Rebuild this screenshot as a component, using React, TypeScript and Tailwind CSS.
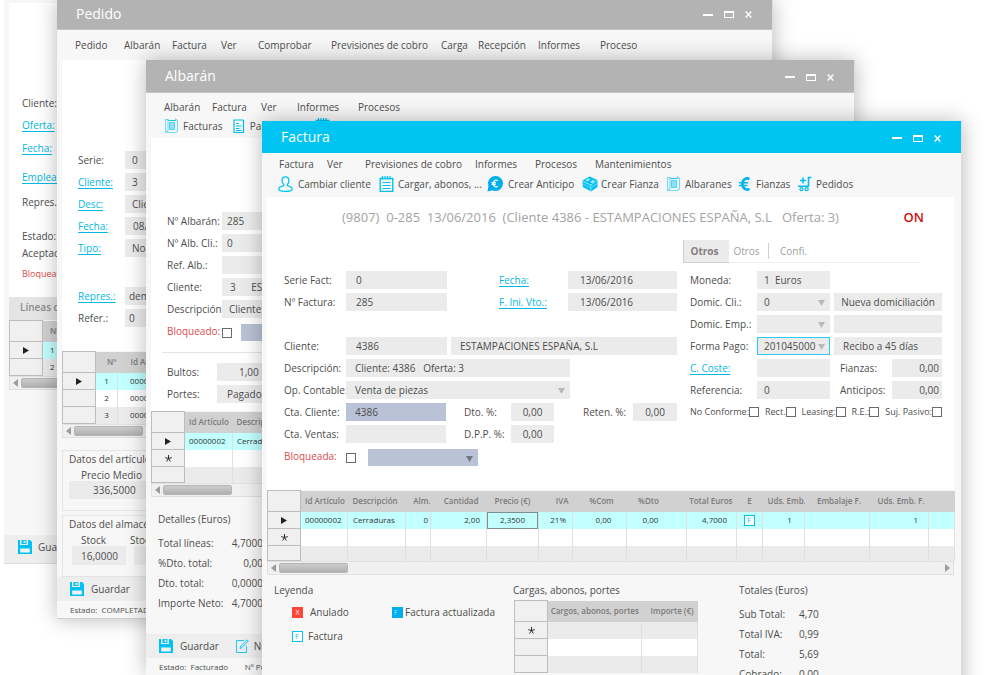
import { useId, type ReactNode } from 'react'
import { clsx } from 'clsx'

/* ---------- icons ---------- */

type IconProps = { className?: string }

function UserIcon({ className }: IconProps) {
  return (
    <svg className={className} viewBox="0 0 16 16" fill="none" stroke="#00c3f3" strokeWidth="1.3">
      <path d="M7.500 .8C5.200 .8 4 2.400 4 4.600c0 1.600.8 3.200 1.700 4v1C3 10.200 .8 11.200 .8 13.200c0 1.500 2.700 2.100 6.700 2.100s6.700-.6 6.700-2.100c0-2-2.200-3-4.900-3.600v-1c.9-.8 1.700-2.400 1.700-4C11 2.400 9.800 .8 7.500 .8z" />
    </svg>
  )
}

function NotepadIcon({ className }: IconProps) {
  return (
    <svg className={className} viewBox="0 0 16 16" fill="none" stroke="#00c3f3">
      <path d="M1.200 2.500h12.600v13H1.200z" strokeWidth="1.400" />
      <path d="M3.500 0v3.500M6 0v3.500M8.500 0v3.500M11 0v3.500" strokeWidth="1.200" />
      <path d="M3.500 6.500h8M3.500 9.500h8M3.500 12.500h8" strokeWidth="1.100" />
    </svg>
  )
}

function EuroBubbleIcon({ className }: IconProps) {
  return (
    <svg className={className} viewBox="0 0 16 16">
      <circle cx="8.500" cy="7.500" r="7.500" fill="#00aef0" />
      <path d="M1.500 9.500L.5 15.500l6-1.500z" fill="#00aef0" />
      <path d="M10.800 4.800C8.800 3.300 6.300 4.500 6.300 7.500s2.500 4.200 4.500 2.700M4.600 6.700h4.500M4.600 8.400h4.200" fill="none" stroke="#fff" strokeWidth="1.300" />
    </svg>
  )
}

function CrateIcon({ className }: IconProps) {
  return (
    <svg className={className} viewBox="0 0 16 16">
      <path d="M.5 4.500L7.500 .5 15.500 4v7L9 15.500.8 11z" fill="#00c0f2" />
      <path d="M.8 5.200l7.900 3.800L15.300 4.500M8.800 9v6.300" fill="none" stroke="#c9f3fd" strokeWidth=".7" />
      <path d="M3.500 4.300l3-1.800 1.800.9-3 1.900zM8.200 6l2.800-1.900 1.800.8-2.800 2z" fill="#bdf0fd" />
      <path d="M1.500 8.200l6.500 3.400M9.500 11.400L15 7.700" stroke="#7fe0f8" strokeWidth=".8" />
    </svg>
  )
}

function PapersIcon({ className }: IconProps) {
  return (
    <svg className={className} viewBox="0 0 16 16" fill="none" stroke="#6edbf7">
      <path d="M1.500 4V1.500h2.500v11L2 14.500h9.500l2-1.500V2.500L11.500 1v1.500H4" strokeWidth="1.100" />
      <path d="M1.500 4.500v10h9.500" strokeWidth="1" />
      <path d="M5.500 4.500h5v7h-5z" fill="#8be3f9" stroke="#4fd3f5" />
      <path d="M4 1.500l.8 1h6.700" stroke="#12c4f2" />
    </svg>
  )
}

function EuroIcon({ className }: IconProps) {
  return (
    <svg className={className} viewBox="0 0 16 16" fill="none" stroke="#00b4f0">
      <path d="M12.500 3.200C9.500 1.300 5.500 3 5.500 8s4 6.700 7 4.800" strokeWidth="2.600" />
      <path d="M2 6.700h9M2 9.500h8.300" strokeWidth="1.500" />
    </svg>
  )
}

function CartIcon({ className }: IconProps) {
  return (
    <svg className={className} viewBox="0 0 16 16" fill="none" stroke="#00bdf2">
      <path d="M14.500 1.500h-3V10.200M1 10.200h11M6 1.500v6M3 4.500h6" strokeWidth="1.600" />
      <circle cx="4.500" cy="13.200" r="1.500" strokeWidth="1.300" />
      <circle cx="9.700" cy="13.200" r="1.500" strokeWidth="1.300" />
    </svg>
  )
}

function DocIcon({ className }: IconProps) {
  return (
    <svg className={className} viewBox="0 0 16 16" fill="none" stroke="#00bdf2">
      <path d="M3 2h9l.5.500v12H3z" strokeWidth="1.200" />
      <path d="M5 5.500h3M5 8h5.500M5 10.500h3.500M5 12.500h5.500" />
    </svg>
  )
}

function SaveIcon({ className }: IconProps) {
  return (
    <svg className={className} viewBox="0 0 14 14">
      <path d="M0 0h2v5h8V0h2l2 2v12H0z" fill="#00c3f3" />
      <path d="M3.500 0h5v4h-5z" fill="#00c3f3" />
      <path d="M5.600 .8h1.800V3H5.600zM2.200 8.500h9.600v4H2.200z" fill="#f2f2f2" />
    </svg>
  )
}

function EditIcon({ className }: IconProps) {
  return (
    <svg className={className} viewBox="0 0 14 14" fill="none" stroke="#1fc8f3">
      <path d="M9 1.500H1.500v12h10V7" />
      <path d="M5 9.500l.6-2.300L12 .8l1.300 1.300-6.200 6.500z" fill="#c9f3fd" />
    </svg>
  )
}

/* ---------- window chrome ---------- */

function TitleBar({ title, active, className }: { title: string; active?: boolean; className: string }) {
  return (
    <header
      className={clsx(
        'flex items-center justify-between pr-4 pl-[19px] text-white',
        active ? 'bg-[#00c5f2]' : 'border-b border-[#c4c4c4] bg-[#b3b3b3]',
        className,
      )}
    >
      <h2 className="text-sm font-normal">{title}</h2>
      <div className="flex items-center gap-[10px] pt-[2px]">
        <button aria-label="Minimizar" className="flex size-[11px] items-center">
          <span className="h-[2px] w-[10px] bg-white" />
        </button>
        <button aria-label="Maximizar" className="flex size-[11px] items-center">
          <span className="h-[7px] w-[10px] border border-t-2 border-white" />
        </button>
        <button aria-label="Cerrar" className="flex size-[11px] items-center">
          <svg className="size-[7px]" viewBox="0 0 7 7" stroke="#fff" strokeWidth="1.400">
            <path d="M.7.500l5.600 6M6.300.500l-5.600 6" />
          </svg>
        </button>
      </div>
    </header>
  )
}

function Menu({ items, className }: { items: string[]; className: string }) {
  return (
    <nav className={clsx('grid', className)}>
      {items.map((item) => (
        <button key={item} className="text-left whitespace-nowrap">
          {item}
        </button>
      ))}
    </nav>
  )
}

function Tool({ icon, children }: { icon: ReactNode; children: ReactNode }) {
  return (
    <button className="flex items-center gap-[3px] whitespace-nowrap">
      {icon}
      {children}
    </button>
  )
}

function Footer({ status, children }: { status: string; children: ReactNode }) {
  return (
    <footer>
      <div className="flex h-6 items-center gap-4 border-t border-[#ececec] bg-[#eeeeee] pb-[2px] pl-[13px]">{children}</div>
      <p className="h-[17px] pl-[13px] text-[8px] leading-[17px] whitespace-pre">{status}</p>
    </footer>
  )
}

/* ---------- form pieces ---------- */

type FieldProps = {
  label: string
  value?: string
  link?: boolean
  select?: boolean
  tone?: 'grey' | 'blue' | 'focus'
  labelClass: string
  fieldClass: string
  align?: string
}

const tones = {
  grey: 'bg-[#ebebeb]',
  blue: 'bg-[#b9c2d6]',
  focus: 'bg-[#ebebeb] border border-[#2ccbf2]',
}

const linkClass = 'text-[#00b9e4] underline underline-offset-2'

function Field({ label, value = '', link, select, tone = 'grey', labelClass, fieldClass, align }: FieldProps) {
  const id = useId()
  const box = clsx('h-[18px] w-full min-w-0 rounded-none', tones[tone], align ?? 'pl-[10px]')

  return (
    <div className="flex h-[18px] items-center">
      {link ? (
        <a href="#" id={`${id}-l`} className={clsx('shrink-0 whitespace-nowrap', linkClass, labelClass)}>
          {label}
        </a>
      ) : (
        <label id={`${id}-l`} htmlFor={id} className={clsx('shrink-0 whitespace-nowrap', labelClass)}>
          {label}
        </label>
      )}
      {select ? (
        <div className={clsx('relative shrink-0', fieldClass)}>
          <select id={id} aria-labelledby={`${id}-l`} className={clsx('block appearance-none', box)}>
            <option>{value}</option>
          </select>
          <Caret dark={tone === 'blue'} />
        </div>
      ) : (
        <div className={clsx('shrink-0', fieldClass)}>
          <input id={id} aria-labelledby={`${id}-l`} defaultValue={value} className={clsx('block', box)} />
        </div>
      )}
    </div>
  )
}

function Caret({ dark }: { dark?: boolean }) {
  return (
    <svg className="pointer-events-none absolute top-[7px] right-[5px] h-[6px] w-[7px]" viewBox="0 0 7 6">
      <path d="M0 0h7L3.500 6z" fill={dark ? '#75757d' : '#b9b9b9'} />
    </svg>
  )
}

function Box({ label, value = '', className }: { label: string; value?: string; className: string }) {
  return (
    <input aria-label={label} defaultValue={value} className={clsx('h-[18px] shrink-0 bg-[#ebebeb] pl-[9px]', className)} />
  )
}

function Check({ label }: { label: string }) {
  return (
    <label className="flex items-center whitespace-nowrap">
      {label}
      <input type="checkbox" className="size-[10px] appearance-none border border-[#6b6b6b] bg-white checked:bg-[#6b6b6b]" />
    </label>
  )
}

function BlockedRow({ label, id, className, selectClass }: { label: string; id: string; className: string; selectClass: string }) {
  return (
    <div className="flex h-[18px] items-center">
      <label htmlFor={id} className={clsx('text-[#dd4b4b]', className)}>
        {label}
      </label>
      <input
        id={id}
        type="checkbox"
        className="mt-[3px] mr-3 size-[10px] shrink-0 appearance-none border border-[#6b6b6b] bg-white checked:bg-[#6b6b6b]"
      />
      <div className={clsx('relative mt-[3px] shrink-0', selectClass)}>
        <select aria-label={`Motivo ${id}`} className="block h-[17px] w-full appearance-none bg-[#b9c2d6]">
          <option></option>
        </select>
        <Caret dark />
      </div>
    </div>
  )
}

/* ---------- grids ---------- */

function RowHead({ mark }: { mark?: 'arrow' | 'new' }) {
  return (
    <th className="border border-[#bdbdbd] bg-[#f0f0f0] p-0 text-center font-normal">
      {mark === 'arrow' && (
        <svg className="mx-auto h-[7px] w-[6px]" viewBox="0 0 6 7">
          <path d="M0 0l6 3.500L0 7z" fill="#222" />
        </svg>
      )}
      {mark === 'new' && (
        <svg className="mx-auto size-[7px]" viewBox="0 0 8 8" stroke="#222" strokeWidth="1.100">
          <path d="M4 0v4M4 4L.300 3M4 4l3.700-1M4 4L1.800 7.500M4 4l2.200 3.500" />
        </svg>
      )}
    </th>
  )
}

type Col = { title: string; width: string; head?: string; cell?: string }
type Row = { mark?: 'arrow' | 'new'; tone: string; height?: string; cells?: ReactNode[] }

function DataGrid({ cols, rows, className }: { cols: Col[]; rows: Row[]; className?: string }) {
  return (
    <table className={clsx('table-fixed border-collapse text-[8px] leading-[10px]', className)}>
      <colgroup>
        <col className="w-[33px]" />
        {cols.map((c, i) => (
          <col key={i} className={c.width} />
        ))}
      </colgroup>
      <thead>
        <tr className="h-[21px] bg-[#d1d1d1] text-[#7a7a7a]">
          <RowHead />
          {cols.map((c, i) => (
            <th key={i} className={clsx('overflow-hidden p-0 font-semibold whitespace-nowrap', c.head ?? 'text-center')}>
              {c.title}
            </th>
          ))}
        </tr>
      </thead>
      <tbody className="text-[#333333]">
        {rows.map((r, i) => (
          <tr key={i} className={clsx(r.height ?? 'h-[17px]', r.tone)}>
            <RowHead mark={r.mark} />
            {cols.map((c, j) => (
              <td key={j} className={clsx('overflow-hidden border-r border-[#e0e0e0] p-0 whitespace-nowrap', c.cell ?? 'text-center')}>
                {r.cells?.[j]}
              </td>
            ))}
          </tr>
        ))}
      </tbody>
    </table>
  )
}

function Scrollbar({ end }: { end?: boolean }) {
  return (
    <div className="flex h-[14px] items-center border border-[#e0e0e0] bg-[#f0f0f0] px-[3px]">
      <svg className="mr-[3px] h-2 w-[5px]" viewBox="0 0 5 8">
        <path d="M5 0v8L0 4z" fill="#9b9b9b" />
      </svg>
      <div className="h-[10px] w-[69px] rounded-[2px] border border-[#b5b5b5] bg-gradient-to-b from-[#cccccc] to-[#b0b0b0]" />
      {end && (
        <svg className="ml-auto h-2 w-[5px]" viewBox="0 0 5 8">
          <path d="M0 0v8l5-4z" fill="#9b9b9b" />
        </svg>
      )}
    </div>
  )
}

const WHITE = 'bg-white'
const CYAN = 'bg-[#c2ffff]'
const GREY = 'bg-[#ebebeb]'

const windowClass = 'absolute border-r border-[#dcdcdc] bg-[#f7f7f7] shadow-[0_0_20px_rgba(0,0,0,0.28)]'

/* ---------- windows ---------- */

function OfertaWindow() {
  return (
    <section className="absolute top-0 left-1 w-[600px] border-b border-[#dcdcdc] bg-[#f7f7f7] pt-[3px]">
      <div className="mx-[5px]">
        <div className="flex h-[294px] flex-col bg-white pt-[92px] pl-[13px] leading-4">
          <span className="h-[22px]">Cliente:</span>
          <a href="#" className={clsx('h-[23px]', linkClass)}>Oferta:</a>
          <a href="#" className={clsx('h-[29px]', linkClass)}>Fecha:</a>
          <a href="#" className={clsx('h-[25px]', linkClass)}>Empleado:</a>
          <span className="h-[34px]">Repres.:</span>
          <span className="h-[17px]">Estado:</span>
          <span className="h-[21px]">Aceptación:</span>
          <span className="text-[9px] text-[#dd4b4b]">Bloqueado:</span>
        </div>
        <h3 className="h-[23px] bg-[#e4e4e4] pl-[11px] text-[10px] leading-[21px] font-semibold text-[#8a8a8a]">Líneas de</h3>
        <DataGrid
          cols={[
            { title: 'Nº', width: 'w-[22px]', head: 'pl-[7px] text-left', cell: 'pl-[7px] text-left' },
            { title: 'Id Artículo', width: 'w-[60px]' },
          ]}
          rows={[
            { mark: 'arrow', tone: CYAN, cells: ['1', '00000001'] },
            { tone: GREY, cells: ['2', '00000002'] },
          ]}
        />
        <Scrollbar />
      </div>
      <div className="mt-[145px] flex h-[28px] items-center bg-[#eeeeee] pb-[4px] pl-[14px]">
        <button className="flex items-center gap-[6px]">
          <SaveIcon className="size-[14px]" />
          Guardar
        </button>
      </div>
    </section>
  )
}

function PedidoWindow() {
  const col = { labelClass: 'w-[47px]', fieldClass: 'w-[120px]' }
  return (
    <section className={clsx(windowClass, 'top-0 left-[57px] w-[716px] border-b border-b-[#cfcfcf]')}>
      <TitleBar title="Pedido" className="h-[30px] pb-[2px]" />
      <Menu
        className="h-[30px] grid-cols-[49px_48px_49px_37px_73px_110px_37px_60px_62px_auto] pl-[18px]"
        items={['Pedido', 'Albarán', 'Factura', 'Ver', 'Comprobar', 'Previsiones de cobro', 'Carga', 'Recepción', 'Informes', 'Proceso']}
      />
      <div className="mx-[5px]">
        <div className="flex h-[291px] flex-col gap-1 bg-white pt-[91px] pl-4">
          <Field {...col} label="Serie:" value="0" align="pl-[7px]" />
          <Field {...col} label="Cliente:" value="3" align="pl-[7px]" link />
          <Field {...col} label="Desc:" value="Cliente: 3" align="pl-[7px]" link />
          <Field {...col} label="Fecha:" value="08/06/2016" align="pl-2" link />
          <Field {...col} label="Tipo:" value="Normal" align="pl-[7px]" link />
          <div className="mt-[26px] flex flex-col gap-1">
            <Field {...col} label="Repres.:" value="demo" align="pl-1" link />
            <Field {...col} label="Refer.:" value="0" align="pl-1" />
          </div>
        </div>
        <DataGrid
          cols={[
            { title: 'Nº', width: 'w-[22px]', head: 'pl-[11px] text-left', cell: 'text-center' },
            { title: 'Id Artículo', width: 'w-[80px]', head: 'pl-[13px] text-left', cell: 'pl-[12px] text-left' },
          ]}
          rows={[
            { mark: 'arrow', tone: CYAN, cells: ['1', '00000001'] },
            { tone: WHITE, cells: ['2', '00000002'] },
            { tone: GREY, cells: ['3', '00000003'] },
          ]}
        />
        <Scrollbar />
        <fieldset className="mt-3 h-[61px] border border-[#e4e4e4] pl-[6px] leading-4">
          <p>Datos del artículo</p>
          <label htmlFor="precio-medio" className="block h-[14px] pl-3">Precio Medio</label>
          <input id="precio-medio" defaultValue="336,5000" className="h-[18px] w-[140px] bg-[#ebebeb] pl-6" />
        </fieldset>
        <fieldset className="mt-1 h-[62px] border border-[#e4e4e4] pl-[6px] leading-4">
          <p>Datos del almacén</p>
          <div className="flex gap-2 pl-[3px]">
            <label className="flex w-[54px] flex-col">
              <span className="h-[14px] pl-[9px]">Stock</span>
              <input defaultValue="16,0000" className="h-[19px] w-full bg-[#ebebeb] pl-[9px]" />
            </label>
            <label className="flex w-[54px] flex-col">
              <span className="-ml-1 h-[14px]">Stock real</span>
              <input defaultValue="" className="h-[19px] w-full bg-[#ebebeb]" />
            </label>
          </div>
        </fieldset>
      </div>
      <Footer status="Estado:  COMPLETADO">
        <button className="flex items-center gap-[7px]">
          <SaveIcon className="size-[14px]" />
          Guardar
        </button>
        <button aria-label="Nuevo pedido" className="flex items-center">
          <EditIcon className="size-[14px]" />
        </button>
      </Footer>
    </section>
  )
}

function AlbaranWindow() {
  const col = { labelClass: 'w-[55px]', fieldClass: 'w-[180px]' }
  const wide = { labelClass: 'w-[50px]', fieldClass: 'w-[180px]' }
  const detalles = [
    ['Total líneas:', '4,7000'],
    ['%Dto. total:', '0,00'],
    ['Dto. total:', '0,0000'],
    ['Importe Neto:', '4,7000'],
  ]
  return (
    <section className={clsx(windowClass, 'top-[60px] left-[146px] w-[709px]')}>
      <TitleBar title="Albarán" className="h-[33px]" />
      <Menu
        className="h-[24px] grid-cols-[48px_49px_36px_61px_auto] pt-1 pl-[18px]"
        items={['Albarán', 'Factura', 'Ver', 'Informes', 'Procesos']}
      />
      <div className="flex h-[21px] items-center gap-2 pb-1 pl-[18px]">
        <Tool icon={<PapersIcon className="size-4" />}>Facturas</Tool>
        <Tool icon={<DocIcon className="size-4" />}>Partes</Tool>
        <button aria-label="Cargar, abonos" className="ml-7">
          <NotepadIcon className="size-4" />
        </button>
      </div>
      <div className="mx-[5px]">
        <div className="flex h-[273px] flex-col gap-1 bg-white pt-[74px] pl-4">
          <Field {...col} label="Nº Albarán:" value="285" align="pl-[5px]" />
          <Field {...col} label="Nº Alb. Cli.:" value="0" align="pl-[5px]" />
          <Field {...col} label="Ref. Alb.:" align="pl-[5px]" />
          <Field {...col} label="Cliente:" value="3      ESTAMPACIONES" align="pl-[8px]" />
          <Field {...col} label="Descripción:" value="Cliente: 3" align="pl-[7px]" />
          <BlockedRow label="Bloqueado:" id="alb-bloqueado" className="w-[55px]" selectClass="w-[110px] -ml-[3px]" />
          <div className="mt-2 mr-4 -ml-[5px] h-px bg-[#e4e4e4]" />
          <div className="mt-[6px] flex flex-col gap-1">
            <Field {...wide} label="Bultos:" value="1,00" align="pl-[22px]" />
            <Field {...wide} label="Portes:" value="Pagados" />
          </div>
        </div>
        <DataGrid
          cols={[
            { title: 'Id Artículo', width: 'w-[48px]', head: 'pl-1 text-left', cell: 'pl-1 text-left' },
            { title: 'Descripción', width: 'w-[80px]', head: 'pl-1 text-left', cell: 'pl-1 text-left' },
          ]}
          rows={[
            { mark: 'arrow', tone: CYAN, cells: ['00000002', 'Cerraduras'] },
            { mark: 'new', tone: WHITE },
            { tone: GREY, height: 'h-[16px]' },
          ]}
        />
        <Scrollbar />
      </div>
      <div className="h-[137px] pt-3 pl-3">
        <h3 className="mb-[6px] h-[18px] leading-5">Detalles (Euros)</h3>
        <dl className="w-[105px] leading-5">
          {detalles.map(([name, value]) => (
            <div key={name} className="flex justify-between">
              <dt>{name}</dt>
              <dd>{value}</dd>
            </div>
          ))}
        </dl>
      </div>
      <Footer status="Estado:  Facturado        Nº Pedido: 3">
        <button className="flex items-center gap-[7px]">
          <SaveIcon className="size-[14px]" />
          Guardar
        </button>
        <button className="flex items-center gap-[5px]">
          <EditIcon className="size-[14px]" />
          Nuevo
        </button>
      </Footer>
    </section>
  )
}

function FacturaBadge({ solid }: { solid?: boolean }) {
  return (
    <span
      className={clsx(
        'inline-flex size-[11px] items-center pl-[2px] align-middle text-[7px] leading-none',
        solid ? 'bg-[#00aef0] text-[#8fe6ff]' : 'border border-[#00c3f3] bg-white text-[#00c3f3]',
      )}
    >
      F
    </span>
  )
}

const facturaCols: Col[] = [
  { title: 'Id Artículo', width: 'w-[47px]', head: 'pl-1 text-left', cell: 'pl-1 text-left' },
  { title: 'Descripción', width: 'w-[58px]', head: 'pl-[5px] text-left', cell: 'pl-[5px] text-left' },
  { title: 'Alm.', width: 'w-[25px]', head: 'text-right', cell: 'pr-[2px] text-right' },
  { title: 'Cantidad', width: 'w-[56px]', head: 'pr-2 text-right', cell: 'pr-[6px] text-right' },
  { title: 'Precio (€)', width: 'w-[52px]' },
  { title: 'IVA', width: 'w-[34px]', head: 'pr-1 text-right', cell: 'pr-[6px] text-right' },
  { title: '%Com', width: 'w-[54px]', head: 'pl-1 text-center', cell: 'pl-2 text-center' },
  { title: '%Dto', width: 'w-[60px]', head: 'pr-4 text-center', cell: 'pr-3 text-center' },
  { title: 'Total Euros', width: 'w-[50px]', head: 'pr-1 text-right', cell: 'pr-[9px] text-right' },
  { title: 'E', width: 'w-[26px]' },
  { title: 'Uds. Emb.', width: 'w-[42px]', head: 'pl-[5px] text-left', cell: 'pl-3 text-center' },
  { title: 'Embalaje F.', width: 'w-[65px]', head: 'pl-1 text-center' },
  { title: 'Uds. Emb. F.', width: 'w-[59px]', head: 'pl-1 text-center', cell: 'pr-[10px] text-right' },
  { title: '', width: 'w-[26px]' },
]

function FacturaWindow() {
  const left = { labelClass: 'w-[62px]' }
  const right = { labelClass: 'w-[67px]', fieldClass: 'w-[73px]', align: 'pl-[7px]' }
  const totals = [
    ['Sub Total:', '4,70'],
    ['Total IVA:', '0,99'],
    ['Total:', '5,69'],
    ['Cobrado:', '0,00'],
  ]
  // only the active row shows the edit frame round the price
  const price = <span className="flex h-[17px] items-center justify-center border border-[#7d8f8f]">2,3500</span>

  return (
    <section className={clsx(windowClass, 'top-[121px] left-[262px] w-[700px]')}>
      <TitleBar title="Factura" active className="h-8" />
      <Menu
        className="h-[22px] grid-cols-[48px_38px_110px_60px_60px_auto] pl-[17px]"
        items={['Factura', 'Ver', 'Previsiones de cobro', 'Informes', 'Procesos', 'Mantenimientos']}
      />
      <div className="grid h-[22px] grid-cols-[101px_108px_95px_84px_71px_60px_auto] items-center justify-items-start pb-[4px] pl-[16px]">
        <Tool icon={<UserIcon className="mr-px size-4" />}>Cambiar cliente</Tool>
        <Tool icon={<NotepadIcon className="size-4" />}>Cargar, abonos, ...</Tool>
        <Tool icon={<EuroBubbleIcon className="mr-[2px] size-4" />}>Crear Anticipo</Tool>
        <Tool icon={<CrateIcon className="size-4" />}>Crear Fianza</Tool>
        <Tool icon={<PapersIcon className="size-4" />}>Albaranes</Tool>
        <Tool icon={<EuroIcon className="size-4" />}>Fianzas</Tool>
        <Tool icon={<CartIcon className="size-4" />}>Pedidos</Tool>
      </div>

      <div className="mr-[7px] ml-[5px]">
        <div className="h-[293px] bg-white pt-[10px] pr-3 pl-[17px]">
          <div className="flex h-5 items-center justify-between pr-[18px] pl-[58px] text-[13px]">
            <h1 className="whitespace-pre text-[#a3a3a3]">{'(9807)  0-285  13/06/2016  (Cliente 4386 - ESTAMPACIONES ESPAÑA, S.L   Oferta: 3)'}</h1>
            <strong className="font-semibold text-[#cc1111]">ON</strong>
          </div>

          <div role="tablist" className="mt-[13px] mr-[22px] ml-auto flex h-[23px] w-[237px] items-center border-b border-[#ededed] text-[#a0a0a0]">
            <button role="tab" aria-selected="true" className="h-[23px] w-[46px] border-b border-l border-[#d0d0d0] bg-[#ebebeb] pr-1 font-bold text-[#808080]">
              Otros
            </button>
            <button role="tab" className="w-[40px] border-r border-[#d0d0d0] pr-1 text-center">Otros</button>
            <button role="tab" className="pl-[11px]">Confi.</button>
          </div>

          <div className="mt-2 flex justify-between">
            <div className="flex w-[393px] flex-col gap-1">
              <div className="flex justify-between">
                <Field {...left} fieldClass="w-[101px]" label="Serie Fact:" value="0" />
                <Field labelClass="w-[69px]" fieldClass="w-[109px]" align="pl-3" label="Fecha:" value="13/06/2016" link />
              </div>
              <div className="mb-[22px] flex justify-between">
                <Field {...left} fieldClass="w-[101px]" label="Nº Factura:" value="285" />
                <Field labelClass="w-[69px]" fieldClass="w-[109px]" align="pl-3" label="F. Ini. Vto.:" value="13/06/2016" link />
              </div>
              <div className="flex justify-between">
                <Field {...left} fieldClass="w-[101px]" label="Cliente:" value="4386" />
                <Box label="Nombre del cliente" className="w-[226px]" value="ESTAMPACIONES ESPAÑA, S.L" />
              </div>
              <Field {...left} fieldClass="w-[224px]" label="Descripción:" value="Cliente: 4386   Oferta: 3" align="pl-[9px]" />
              <Field {...left} fieldClass="w-[224px]" label="Op. Contable:" value="Venta de piezas" select align="pl-[9px]" />
              <div className="flex gap-[18px]">
                <Field {...left} fieldClass="w-[100px]" label="Cta. Cliente:" value="4386" tone="blue" align="pl-[9px]" />
                <Field labelClass="w-[47px]" fieldClass="w-[43px]" align="text-center" label="Dto. %:" value="0,00" />
                <div className="ml-auto">
                  <Field labelClass="w-[50px]" fieldClass="w-[44px]" align="text-center" label="Reten. %:" value="0,00" />
                </div>
              </div>
              <div className="flex gap-[18px]">
                <Field {...left} fieldClass="w-[100px]" label="Cta. Ventas:" />
                <Field labelClass="w-[47px]" fieldClass="w-[43px]" align="text-center" label="D.P.P. %:" value="0,00" />
              </div>
              <BlockedRow label="Bloqueada:" id="fac-bloqueada" className="w-[62px]" selectClass="w-[110px]" />
            </div>

            <div className="flex w-[252px] flex-col gap-1">
              <Field {...right} label="Moneda:" value="1  Euros" />
              <div className="flex justify-between">
                <Field {...right} label="Domic. Cli.:" value="0" select />
                <button className="h-[18px] w-[108px] bg-[#ebebeb]">Nueva domiciliación</button>
              </div>
              <div className="flex justify-between">
                <Field {...right} label="Domic. Emp.:" select />
                <Box label="Entidad" className="w-[108px]" />
              </div>
              <div className="flex justify-between">
                <Field {...right} label="Forma Pago:" value="201045000" select tone="focus" align="pl-[6px]" />
                <Box label="Descripción de pago" className="w-[108px]" value="Recibo a 45 días" />
              </div>
              <div className="flex justify-between">
                <Field {...right} label="C. Coste:" link />
                <Field labelClass="w-[52px]" fieldClass="w-[50px]" align="pr-[3px] text-right" label="Fianzas:" value="0,00" />
              </div>
              <div className="flex justify-between">
                <Field {...right} label="Referencia:" value="0" />
                <Field labelClass="w-[52px]" fieldClass="w-[50px]" align="pr-[3px] text-right" label="Anticipos:" value="0,00" />
              </div>
              <div className="flex h-[18px] items-center justify-between text-[9px]">
                <Check label="No Conforme:" />
                <Check label="Rect." />
                <Check label="Leasing:" />
                <Check label="R.E.:" />
                <Check label="Suj. Pasivo:" />
              </div>
            </div>
          </div>
        </div>

        <DataGrid
          className="w-full"
          cols={facturaCols}
          rows={[
            {
              mark: 'arrow',
              tone: CYAN,
              cells: ['00000002', 'Cerraduras', '0', '2,00', price, '21%', '0,00', '0,00', '4,7000', <FacturaBadge />, '1', '', '1'],
            },
            { mark: 'new', tone: WHITE },
            { tone: GREY, height: 'h-[15px]' },
          ]}
        />
        <Scrollbar end />
      </div>

      <div className="grid grid-cols-[239px_226px_auto] pt-[7px] pb-6 pl-3 leading-4">
        <div>
          <h3>Leyenda</h3>
          <ul className="grid grid-cols-[100px_auto] gap-y-2 pt-[6px] pl-[18px]">
            <li className="flex items-center gap-[7px]">
              <span className="flex size-[11px] items-center justify-center bg-[#ff4538] text-[7px] leading-none text-white">X</span>
              Anulado
            </li>
            <li className="flex items-center gap-[2px]">
              <FacturaBadge solid />
              Factura actualizada
            </li>
            <li className="flex items-center gap-[5px]">
              <FacturaBadge />
              Factura
            </li>
          </ul>
        </div>
        <div>
          <h3>Cargas, abonos, portes</h3>
          <DataGrid
            className="mt-[2px] ml-px"
            cols={[
              { title: 'Cargos, abonos, portes', width: 'w-[94px]' },
              { title: 'Importe (€)', width: 'w-[56px]', head: 'pr-1 text-right' },
            ]}
            rows={[{ mark: 'new', tone: GREY }, { tone: WHITE }, { tone: GREY }]}
          />
        </div>
        <div>
          <h3>Totales (Euros)</h3>
          <dl className="pt-[6px] leading-5">
            {totals.map(([name, value]) => (
              <div key={name} className="flex">
                <dt className="w-[60px]">{name}</dt>
                <dd>{value}</dd>
              </div>
            ))}
          </dl>
        </div>
      </div>
    </section>
  )
}

export default function App() {
  return (
    <main className="relative h-screen overflow-hidden bg-white font-['Open_Sans','Noto_Sans',sans-serif] text-[10px] leading-4 text-[#4d4d4d]">
      <OfertaWindow />
      <PedidoWindow />
      <AlbaranWindow />
      <FacturaWindow />
    </main>
  )
}
